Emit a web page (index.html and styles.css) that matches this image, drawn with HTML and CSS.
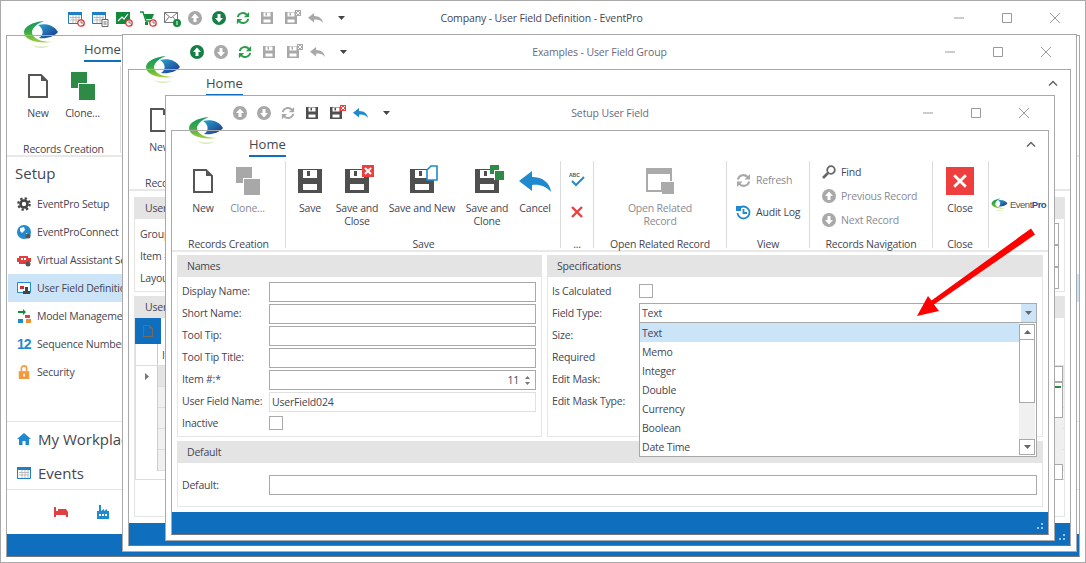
FILE: index.html
```html
<!DOCTYPE html>
<html lang="en">
<head>
<meta charset="utf-8">
<title>EventPro</title>
<link rel="stylesheet" href="styles.css">
</head>
<body>
<svg class="defs" aria-hidden="true">
  <defs>
    <linearGradient id="gGreen" x1="0.5" y1="0" x2="0.6" y2="1"><stop offset="0" stop-color="#0f9a68"/><stop offset=".45" stop-color="#3aa845"/><stop offset="1" stop-color="#a8d03c"/></linearGradient>
    <linearGradient id="gBlue" x1="0" y1="0" x2="1" y2="1"><stop offset="0" stop-color="#2ba5cf"/><stop offset="1" stop-color="#1b2f8a"/></linearGradient>
    <symbol id="logo" viewBox="0 0 34 30">
      <path fill="url(#gGreen)" d="M20 1C8 2 0 7 0 12c0 7 11 12 28 10-12 0-20-4-20-10 0-4 6-9 12-11z"/>
      <path fill="url(#gBlue)" d="M14 5c8-2 16 0 20 7-4 5-12 7-19 6 5-3 5-9-1-13z"/>
      <path fill="#d5e8b0" d="M8 25c6 2 13 2 18 0-5 4-13 4-18 0z"/>
    </symbol>
    <symbol id="floppy" viewBox="0 0 24 24"><path fill="currentColor" fill-rule="evenodd" d="M0 0H24V24H0ZM5 1V9H19V1ZM5 15V21H19V15ZM9 2H12V7H9Z"/></symbol>
    <symbol id="page" viewBox="0 0 20 24"><path fill="none" stroke="currentColor" stroke-width="2" d="M1 1H13L19 7V23H1Z"/><path fill="currentColor" d="M13 1L19 7H13Z"/></symbol>
    <symbol id="clone" viewBox="0 0 24 28"><path fill="currentColor" d="M0 0H16V16H0Z"/><path fill="#fff" d="M7 11H24V28H7Z"/><path fill="currentColor" d="M8 12H24V28H8Z"/></symbol>
    <symbol id="up" viewBox="0 0 14 14"><circle cx="7" cy="7" r="7" fill="currentColor"/><path fill="#fff" d="M7 2.500L11 7H8.500V11H5.500V7H3Z"/></symbol>
    <symbol id="down" viewBox="0 0 14 14"><circle cx="7" cy="7" r="7" fill="currentColor"/><path fill="#fff" d="M7 11.500L3 7H5.500V3H8.500V7H11Z"/></symbol>
    <symbol id="refresh" viewBox="0 0 16 16"><g fill="none" stroke="currentColor" stroke-width="2.200"><path d="M2 7a6 6 0 0 1 10.500-2.500"/><path d="M14 9a6 6 0 0 1-10.500 2.500"/></g><path fill="currentColor" d="M15 1V7H9ZM1 15V9H7Z"/></symbol>
    <symbol id="undo" viewBox="0 0 32 21"><path fill="currentColor" d="M0 10L13 0V6C24 6 31 12 32 21 27 15 20 13 13 14V20Z"/></symbol>
    <symbol id="caret" viewBox="0 0 7 4"><path fill="currentColor" d="M0 0H7L3.500 4Z"/></symbol>
    <symbol id="chev" viewBox="0 0 10 6"><path fill="none" stroke="#666" stroke-width="1.500" d="M1 5.500L5 1.500L9 5.500"/></symbol>
    <symbol id="min" viewBox="0 0 10 10"><path stroke="#999" d="M0 5H10"/></symbol>
    <symbol id="max" viewBox="0 0 10 10"><path fill="none" stroke="#999" d="M.5 .5H9.500V9.500H.5Z"/></symbol>
    <symbol id="close" viewBox="0 0 10 10"><path stroke="#999" d="M0 0L10 10M10 0L0 10"/></symbol>
    <symbol id="x" viewBox="0 0 12 12"><path stroke="currentColor" stroke-width="2.400" d="M1 1L11 11M11 1L1 11"/></symbol>
    <symbol id="xbadge" viewBox="0 0 6 6"><path fill="currentColor" d="M0 0H6V6H0Z"/><path stroke="#fff" d="M1 1L5 5M5 1L1 5"/></symbol>
    <symbol id="openrel" viewBox="0 0 28 26"><path fill="#aaa" fill-rule="evenodd" d="M0 0H26V24H0ZM2 6V22H15V14H24V6Z"/><path fill="#fff" d="M15 13H28V14H15Z"/><path fill="#aaa" d="M16 14H28V26H16Z"/></symbol>
    <symbol id="audit" viewBox="0 0 15 15"><g fill="none" stroke="#1f8ace" stroke-width="1.800"><path d="M3 3.500A6 6 0 1 1 1.500 8"/><path d="M7.500 4V8H11"/></g><path fill="#1f8ace" d="M0 1H5V6H0Z"/></symbol>
    <symbol id="find" viewBox="0 0 14 14"><circle cx="9" cy="5" r="3.800" fill="none" stroke="#666" stroke-width="1.800"/><path stroke="#666" stroke-width="2.600" d="M6 8L1 13"/></symbol>
    <symbol id="cal" viewBox="0 0 14 14"><path fill="#fff" stroke="#1f7ec4" d="M.5 1.500H13.500V12.500H.5Z"/><path fill="#1f7ec4" d="M0 1H14V4H0Z"/><path stroke="#bbb" d="M2 6.500H12M2 9H12M5 4V12M8 4V12M11 4V12"/></symbol>
    <symbol id="clock" viewBox="0 0 8 8"><circle cx="4" cy="4" r="3.200" fill="#fff" stroke="#d33" stroke-width="1.300"/><path stroke="#555" stroke-width=".8" fill="none" d="M4 2V4H6"/></symbol>
    <symbol id="gear" viewBox="0 0 14 14"><circle cx="7" cy="7" r="3.500" fill="none" stroke="currentColor" stroke-width="2.600"/><circle cx="7" cy="7" r="5.700" fill="none" stroke="currentColor" stroke-width="2.200" stroke-dasharray="2.300 2.170"/></symbol>
  </defs>
</svg>

<main class="desk">

  <section class="win win-a">
    <header class="titlebar">
      <div class="qat">
        <span class="q"><svg class="i14"><use href="#cal"/></svg><svg class="badge"><use href="#clock"/></svg></span>
        <span class="q"><svg class="i14"><use href="#cal"/></svg><svg class="badge" viewBox="0 0 7 8"><path fill="#fff" stroke="#666" d="M.5 .5H6.500V7.500H.5ZM2 3H5M2 5H5"/></svg></span>
        <span class="q"><svg class="i14" viewBox="0 0 14 14"><path fill="#118a3c" d="M0 1H14V13H0Z"/><path fill="none" stroke="#fff" stroke-width="1.200" d="M2 10L6 6L8 8L12 3"/></svg><svg class="badge"><use href="#clock"/></svg></span>
        <span class="q"><svg class="i14" viewBox="0 0 14 14"><path fill="none" stroke="#118a3c" stroke-width="1.400" d="M0 1H3L6 10H12"/><path fill="#118a3c" d="M4 3H14L12 8H6ZM5 11H8V14H5ZM10 11H12V14H10Z"/></svg><svg class="badge"><use href="#clock"/></svg></span>
        <span class="q"><svg class="i14" viewBox="0 0 14 12"><path fill="#fff" stroke="#777" d="M.5 .5H13.500V10.500H.5Z"/><path fill="none" stroke="#777" d="M.5 .5L7 6L13.500 .5M.5 10.500L5 5M13.500 10.500L9 5"/></svg><svg class="badge" viewBox="0 0 8 8"><circle cx="4" cy="4" r="4" fill="#118a3c"/><path stroke="#fff" d="M4 2V6"/></svg></span>
        <span class="q grey"><svg class="qi"><use href="#up"/></svg></span>
        <span class="q green-d"><svg class="qi"><use href="#down"/></svg></span>
        <span class="q green"><svg class="qi"><use href="#refresh"/></svg></span>
        <span class="q grey"><svg class="qf"><use href="#floppy"/></svg></span>
        <span class="q grey"><svg class="qf"><use href="#floppy"/></svg><svg class="badge-x"><use href="#xbadge"/></svg></span>
        <span class="q grey"><svg class="qu"><use href="#undo"/></svg></span>
        <svg class="q-caret"><use href="#caret"/></svg>
      </div>
      <h1 class="title title-dark">Company - User Field Definition - EventPro</h1>
      <div class="ctrls">
        <span class="ctrl"><svg class="i10"><use href="#min"/></svg></span>
        <span class="ctrl"><svg class="i10"><use href="#max"/></svg></span>
        <span class="ctrl"><svg class="i10"><use href="#close"/></svg></span>
      </div>
    </header>
    <svg class="logo logo-a"><use href="#logo"/></svg>
    <div class="frame">
      <div class="tabrow"><span class="tab">Home</span></div>
      <div class="ribbon">
        <div class="group g-records">
          <div class="gbody">
            <div class="rb w44"><span class="rb-ic"><svg class="ic-page"><use href="#page"/></svg></span><span class="rb-t">New</span></div>
            <div class="rb w45"><span class="rb-ic"><svg class="ic-clone green-c"><use href="#clone"/></svg></span><span class="rb-t">Clone...</span></div>
          </div>
          <div class="glabel">Records Creation</div>
        </div>
      </div>
      <nav class="side">
        <h2 class="side-h">Setup</h2>
        <ul class="side-list">
          <li class="side-i"><svg class="i14 gear-dark"><use href="#gear"/></svg>EventPro Setup</li>
          <li class="side-i"><svg class="i14" viewBox="0 0 14 14"><circle cx="7" cy="7" r="7" fill="#1f8ace"/><path fill="#fff" d="M3 3L7 2L8 5L5 8L3 6ZM9 8L12 9L10 12Z"/><circle cx="11" cy="11" r="2.500" fill="#555"/></svg>EventProConnect</li>
          <li class="side-i"><svg class="i14" viewBox="0 0 14 14"><path fill="#e04040" d="M2 3H11V11H2ZM0 5H14V9H0Z"/><path fill="#fff" d="M4 5H6V7H4ZM7 5H9V7H7Z"/><circle cx="11" cy="11" r="2.500" fill="#555"/></svg>Virtual Assistant Setup</li>
          <li class="side-i on"><svg class="i14" viewBox="0 0 14 14"><path fill="#fff" stroke="#1f8ace" d="M.5 1.500H13.500V11.500H.5Z"/><path fill="#c33" d="M3 5H7V8H3Z"/><path fill="#444" d="M8 6H11V10H13V13H6V10H8Z"/></svg>User Field Definitions</li>
          <li class="side-i"><svg class="i14" viewBox="0 0 14 14"><path fill="#118a3c" d="M1 2H6V0L9 3L6 6V4H1Z"/><path fill="#1f8ace" d="M1 10H6V14H1Z"/><path fill="#e04040" d="M8 6H13V9H8Z"/><path fill="#f09030" d="M9 10H14V14H9Z"/></svg>Model Management</li>
          <li class="side-i"><span class="ic-12">12</span>Sequence Numbers</li>
          <li class="side-i"><svg class="i14" viewBox="0 0 14 16"><path fill="none" stroke="#f59a3c" stroke-width="1.800" d="M4 7V4a3 3 0 0 1 6 0V7"/><path fill="#f59a3c" d="M1 7H13V16H1Z"/><path fill="#fff" d="M6 10H8V13H6Z"/></svg>Security</li>
        </ul>
        <div class="side-big">
          <div class="big-i"><svg class="i14" viewBox="0 0 14 12"><path fill="#1f8ace" d="M7 0L14 6H12V12H8.500V8H5.500V12H2V6H0Z"/></svg>My Workplace</div>
          <div class="big-i"><svg class="i14"><use href="#cal"/></svg>Events</div>
        </div>
        <div class="side-foot">
          <svg class="i14" viewBox="0 0 14 10"><path fill="#e04040" d="M0 0H2V4H4V2H12L14 5V10H12V8H2V10H0Z"/></svg>
          <svg class="i14 fact" viewBox="0 0 12 14"><path fill="#1f8ace" d="M2 0H4V6L7 4V6L10 4V6H12V14H0V6H2Z"/><path fill="#fff" d="M2 9H4V11H2ZM5 9H7V11H5ZM8 9H10V11H8Z"/></svg>
        </div>
      </nav>
      <div class="status"></div>
    </div>
  </section>

  <section class="win win-b">
    <header class="titlebar">
      <div class="qat">
        <span class="q green-d"><svg class="qi"><use href="#up"/></svg></span>
        <span class="q grey"><svg class="qi"><use href="#down"/></svg></span>
        <span class="q green"><svg class="qi"><use href="#refresh"/></svg></span>
        <span class="q grey"><svg class="qf"><use href="#floppy"/></svg></span>
        <span class="q grey"><svg class="qf"><use href="#floppy"/></svg><svg class="badge-x"><use href="#xbadge"/></svg></span>
        <span class="q grey"><svg class="qu"><use href="#undo"/></svg></span>
        <svg class="q-caret"><use href="#caret"/></svg>
      </div>
      <h1 class="title">Examples - User Field Group</h1>
      <div class="ctrls">
        <span class="ctrl"><svg class="i10"><use href="#min"/></svg></span>
        <span class="ctrl"><svg class="i10"><use href="#max"/></svg></span>
        <span class="ctrl"><svg class="i10"><use href="#close"/></svg></span>
      </div>
    </header>
    <svg class="logo logo-b"><use href="#logo"/></svg>
    <div class="frame">
      <div class="tabrow"><span class="tab">Home</span><svg class="chev"><use href="#chev"/></svg></div>
      <div class="ribbon">
        <div class="group g-records">
          <div class="gbody">
            <div class="rb w44"><span class="rb-ic"><svg class="ic-page"><use href="#page"/></svg></span><span class="rb-t">New</span></div>
          </div>
          <div class="glabel">Records Creation</div>
        </div>
      </div>
      <div class="b-body">
        <div class="b-panel b-p1">
          <div class="phead">User Field Group</div>
          <div class="b-form">
            <div class="b-row"><span class="b-lab">Group Name</span><span class="b-inp"></span></div>
            <div class="b-row"><span class="b-lab">Item #</span><span class="b-inp"></span></div>
            <div class="b-row"><span class="b-lab">Layout</span><span class="b-inp"></span></div>
          </div>
        </div>
        <div class="b-panel b-p2">
          <div class="phead">User Fields</div>
          <div class="b-tool"><span class="b-newbtn"><svg class="ic-mini"><use href="#page"/></svg></span></div>
          <div class="b-grid">
            <div class="b-ghead"><span class="b-gind"></span><span class="b-gcol">Item #</span></div>
            <div class="b-grow sel"><span class="b-gind"><svg class="tri" viewBox="0 0 4 7"><path fill="#777" d="M0 0L4 3.500L0 7Z"/></svg></span><span class="b-gcell"></span></div>
            <div class="b-grow"><span class="b-gind"></span><span class="b-gcell"></span></div>
            <div class="b-grow"><span class="b-gind"></span><span class="b-gcell"></span></div>
            <div class="b-grow"><span class="b-gind"></span><span class="b-gcell"></span></div>
            <div class="b-grow"><span class="b-gind"></span><span class="b-gcell"></span></div>
            <div class="b-sb">
              <span class="sb-btn"></span>
              <span class="sb-th"><i class="sb-mark"></i></span>
              <span class="sb-tr"></span>
              <span class="sb-btn"></span>
            </div>
          </div>
        </div>
      </div>
      <div class="status"><span class="grip"></span></div>
    </div>
  </section>

  <section class="win win-c">
    <header class="titlebar">
      <div class="qat">
        <span class="q grey"><svg class="qi"><use href="#up"/></svg></span>
        <span class="q grey"><svg class="qi"><use href="#down"/></svg></span>
        <span class="q grey"><svg class="qi"><use href="#refresh"/></svg></span>
        <span class="q dark"><svg class="qf"><use href="#floppy"/></svg></span>
        <span class="q dark"><svg class="qf"><use href="#floppy"/></svg><svg class="badge-x red"><use href="#xbadge"/></svg></span>
        <span class="q blue"><svg class="qu"><use href="#undo"/></svg></span>
        <svg class="q-caret"><use href="#caret"/></svg>
      </div>
      <h1 class="title">Setup User Field</h1>
      <div class="ctrls">
        <span class="ctrl"><svg class="i10"><use href="#min"/></svg></span>
        <span class="ctrl"><svg class="i10"><use href="#max"/></svg></span>
        <span class="ctrl"><svg class="i10"><use href="#close"/></svg></span>
      </div>
    </header>
    <svg class="logo logo-c"><use href="#logo"/></svg>
    <div class="frame">
      <div class="tabrow"><span class="tab">Home</span><svg class="chev"><use href="#chev"/></svg></div>
      <div class="ribbon">
        <div class="group g-records">
          <div class="gbody">
            <div class="rb w44"><span class="rb-ic"><svg class="ic-page"><use href="#page"/></svg></span><span class="rb-t">New</span></div>
            <div class="rb w45"><span class="rb-ic"><svg class="ic-clone grey"><use href="#clone"/></svg></span><span class="rb-t off">Clone...</span></div>
          </div>
          <div class="glabel">Records Creation</div>
        </div>
        <div class="group g-save">
          <div class="gbody">
            <div class="rb w46"><span class="rb-ic"><svg class="ic-fl"><use href="#floppy"/></svg></span><span class="rb-t">Save</span></div>
            <div class="rb w48"><span class="rb-ic"><span class="fl-wrap"><svg class="ic-fl"><use href="#floppy"/></svg><svg class="ov-x" viewBox="0 0 12 12"><path fill="#ef3e3e" d="M0 0H12V12H0Z"/><path stroke="#fff" stroke-width="2" d="M3 3L9 9M9 3L3 9"/></svg></span></span><span class="rb-t">Save and<br>Close</span></div>
            <div class="rb w82"><span class="rb-ic"><span class="fl-wrap"><svg class="ic-fl"><use href="#floppy"/></svg><svg class="ov-pg" viewBox="0 0 12 16"><path fill="#fff" stroke="#1f8ace" stroke-width="1.600" d="M1 5L5 1H11V15H1Z"/></svg></span></span><span class="rb-t">Save and New</span></div>
            <div class="rb w48"><span class="rb-ic"><span class="fl-wrap"><svg class="ic-fl"><use href="#floppy"/></svg><svg class="ov-cl" viewBox="0 0 14 15"><path fill="#2e8b45" d="M0 0H9V9H0Z"/><path fill="#fff" d="M4 5H14V15H4Z"/><path fill="#2e8b45" d="M5 6H14V15H5Z"/></svg></span></span><span class="rb-t">Save and<br>Clone</span></div>
            <div class="rb w48"><span class="rb-ic"><svg class="ic-undo blue"><use href="#undo"/></svg></span><span class="rb-t">Cancel</span></div>
          </div>
          <div class="glabel">Save</div>
        </div>
        <div class="group g-spell">
          <div class="gbody col">
            <div class="sm-ic"><svg class="ic-abc" viewBox="0 0 16 15"><text x="0" y="5" class="abc">ABC</text><path fill="none" stroke="#1f8ace" stroke-width="2" d="M3 9L7 13L15 5"/></svg></div>
            <div class="sm-ic red"><svg class="i12"><use href="#x"/></svg></div>
          </div>
          <div class="glabel">...</div>
        </div>
        <div class="group g-open">
          <div class="gbody">
            <div class="rb wfull"><span class="rb-ic"><svg class="ic-open"><use href="#openrel"/></svg></span><span class="rb-t off">Open Related<br>Record</span></div>
          </div>
          <div class="glabel">Open Related Record</div>
        </div>
        <div class="group g-view">
          <div class="gbody col">
            <div class="sm"><svg class="i15 grey"><use href="#refresh"/></svg><span class="off">Refresh</span></div>
            <div class="sm"><svg class="i15"><use href="#audit"/></svg><span>Audit Log</span></div>
          </div>
          <div class="glabel">View</div>
        </div>
        <div class="group g-nav">
          <div class="gbody col tight">
            <div class="sm sm24"><svg class="i14 find"><use href="#find"/></svg><span>Find</span></div>
            <div class="sm sm24"><svg class="i14 grey"><use href="#up"/></svg><span class="off">Previous Record</span></div>
            <div class="sm sm24"><svg class="i14 grey"><use href="#down"/></svg><span class="off">Next Record</span></div>
          </div>
          <div class="glabel">Records Navigation</div>
        </div>
        <div class="group g-close">
          <div class="gbody">
            <div class="rb wfull"><span class="rb-ic"><span class="closebtn"><svg class="ic-xw"><use href="#x"/></svg></span></span><span class="rb-t">Close</span></div>
          </div>
          <div class="glabel">Close</div>
        </div>
        <div class="brand">
          <svg class="brand-ic"><use href="#logo"/></svg><span class="brand-t">Event<b>Pro</b></span>
        </div>
      </div>
      <div class="c-body">
        <div class="c-top">
          <div class="panel p-names">
            <div class="phead">Names</div>
            <div class="pbody">
              <div class="row"><label class="lab">Display Name:</label><span class="inp"></span></div>
              <div class="row"><label class="lab">Short Name:</label><span class="inp"></span></div>
              <div class="row"><label class="lab">Tool Tip:</label><span class="inp"></span></div>
              <div class="row"><label class="lab">Tool Tip Title:</label><span class="inp"></span></div>
              <div class="row"><label class="lab">Item #:*</label><span class="inp num">11<span class="spin"><svg class="spin-a up"><use href="#caret"/></svg><svg class="spin-a"><use href="#caret"/></svg></span></span></div>
              <div class="row"><label class="lab">User Field Name:</label><span class="inp ro">UserField024</span></div>
              <div class="row"><label class="lab">Inactive</label><span class="chk"></span></div>
            </div>
          </div>
          <div class="panel p-spec">
            <div class="phead">Specifications</div>
            <div class="pbody">
              <div class="row"><label class="lab">Is Calculated</label><span class="chk"></span></div>
              <div class="row"><label class="lab">Field Type:</label>
                <span class="combo">Text<span class="combo-btn"><svg class="caret-g"><use href="#caret"/></svg></span>
                  <span class="drop">
                    <span class="drop-list">
                      <span class="opt on">Text</span>
                      <span class="opt">Memo</span>
                      <span class="opt">Integer</span>
                      <span class="opt">Double</span>
                      <span class="opt">Currency</span>
                      <span class="opt">Boolean</span>
                      <span class="opt">Date Time</span>
                    </span>
                    <span class="drop-sb">
                      <span class="dsb-btn"><svg class="caret-g flip"><use href="#caret"/></svg></span>
                      <span class="dsb-th"></span>
                      <span class="dsb-tr"></span>
                      <span class="dsb-btn"><svg class="caret-g"><use href="#caret"/></svg></span>
                    </span>
                  </span>
                </span>
              </div>
              <div class="row"><label class="lab">Size:</label></div>
              <div class="row"><label class="lab">Required</label></div>
              <div class="row"><label class="lab">Edit Mask:</label></div>
              <div class="row"><label class="lab">Edit Mask Type:</label></div>
            </div>
          </div>
        </div>
        <div class="panel p-default">
          <div class="phead">Default</div>
          <div class="pbody pad-default">
            <div class="row"><label class="lab">Default:</label><span class="inp"></span></div>
          </div>
        </div>
      </div>
      <div class="status"><span class="grip"></span></div>
    </div>
  </section>

  <svg class="arrow" viewBox="0 0 1086 563"><path fill="#f00" d="M1031 228.500L1035 234.500L934 304.500L939 311L917 316L928 296L931.500 300.500Z"/></svg>
</main>
</body>
</html>
```

FILE: styles.css
```css
* { box-sizing: border-box; }
html, body { margin: 0; padding: 0; }
body {
  width: 1086px; height: 563px; overflow: hidden; background: #fff;
  font-family: "Open Sans", "Noto Sans", sans-serif; font-size: 10.500px; letter-spacing: -.2px; color: #454552;
}
.defs { position: absolute; width: 0; height: 0; }
.desk { position: relative; width: 1086px; height: 563px; overflow: hidden; }

/* windows */
.win { position: absolute; background: #fff; border: 1px solid #a9a9a9; display: flex; flex-direction: column; overflow: hidden; }
.win-a { left: 0; top: 0; width: 1086px; height: 563px; }
.win-b { left: 122px; top: 34px; width: 955px; height: 518px; }
.win-c { left: 165px; top: 95px; width: 890px; height: 446px; }

.titlebar { height: 34px; flex: none; display: grid; grid-template-columns: 1fr auto 1fr; align-items: center; }
.qat { display: flex; align-items: center; padding-left: 62px; }
.q { position: relative; display: flex; width: 24px; height: 18px; align-items: center; justify-content: center; flex: none; }
.qi { width: 14px; height: 14px; }
.qf { width: 12px; height: 12px; }
.qu { width: 15px; height: 10px; }
.badge { position: absolute; right: 2px; bottom: 0; width: 8px; height: 8px; }
.badge-x { position: absolute; right: 2px; top: 1px; width: 6px; height: 6px; }
.q-caret { width: 7px; height: 4px; margin-left: 11px; color: #444; }
.title { margin: 0; font-size: 10.500px; font-weight: 400; letter-spacing: -.13px; color: #6a6a80; white-space: nowrap; }
.title-dark { color: #454552; margin-right: 3px; }
.ctrls { display: flex; justify-content: flex-end; padding-right: 6px; }
.ctrl { width: 48px; height: 34px; display: flex; align-items: center; justify-content: center; }
.i10 { width: 10px; height: 10px; }
.i12 { width: 12px; height: 12px; }
.i14 { width: 14px; height: 14px; flex: none; }
.i15 { width: 15px; height: 15px; flex: none; }

.grey { color: #a8a8a8; }
.dark { color: #4f4f4f; }
.green { color: #2e9a4c; }
.green-d { color: #177f45; }
.blue { color: #1f8ace; }
.green-c { color: #2e8b45; }
.red { color: #ef3e3e; }

/* logo floats over the frame edge */
.logo { position: absolute; width: 34px; height: 30px; background: #fff; box-shadow: 0 0 0 5px #fff; }
.logo-a { left: 23px; top: 19px; }
.logo-b { left: 23px; top: 20px; }
.logo-c { left: 23px; top: 20px; }

/* frame */
.frame { flex: 1; min-height: 0; margin: 0 5px 5px; border: 1px solid #a9a9a9; border-bottom-color: #777; display: flex; flex-direction: column; position: relative; }
.tabrow { height: 26px; flex: none; padding-left: 77px; position: relative; display: flex; }
.tab { font-size: 13px; letter-spacing: 0; height: 26px; line-height: 26px; border-bottom: 2.500px solid #0f6ebd; color: #454552; }
.chev { position: absolute; right: 12px; top: 10px; width: 10px; height: 6px; }
.ribbon { height: 95px; flex: none; padding: 4px 0; display: flex; border-bottom: 2px solid #e8e8e8; }
.group { height: 87px; display: flex; flex-direction: column; border-right: 1px solid #dcdcdc; flex: none; }
.gbody { flex: 1; min-height: 0; display: flex; }
.gbody.col { flex-direction: column; }
.glabel { height: 14px; line-height: 14px; margin-bottom: -3px; text-align: center; white-space: nowrap; }
.g-records { width: 114px; padding-left: 9px; }
.g-records .glabel { margin-left: -9px; }
.g-save { width: 275px; padding-left: 1px; }
.g-spell { width: 33px; }
.g-open { width: 133px; }
.g-view { width: 83px; }
.g-nav { width: 123px; }
.g-close { width: 56px; padding-right: 1px; }
.rb { display: flex; flex-direction: column; align-items: center; padding-top: 7px; flex: none; }
.rb-ic { height: 26px; margin-bottom: 8px; display: flex; align-items: center; justify-content: center; }
.rb-t { line-height: 13px; text-align: center; white-space: nowrap; }
.off { color: #8a8a94; }
.w44 { width: 44px; } .w45 { width: 45px; } .w46 { width: 46px; } .w48 { width: 48px; } .w82 { width: 82px; }
.wfull { width: 100%; }
.ic-page { width: 20px; height: 24px; color: #555; }
.ic-clone { width: 24px; height: 28px; }
.ic-fl { width: 24px; height: 24px; color: #4f4f4f; display: block; }
.fl-wrap { position: relative; display: block; width: 24px; height: 24px; }
.ov-x { position: absolute; left: 17px; top: -4px; width: 12px; height: 12px; }
.ov-pg { position: absolute; left: 16px; top: -4px; width: 12px; height: 16px; }
.ov-cl { position: absolute; left: 15px; top: -4px; width: 14px; height: 15px; }
.ic-undo { width: 32px; height: 21px; }
.ic-open { width: 28px; height: 26px; }
.sm-ic { height: 33px; display: flex; align-items: center; justify-content: center; padding-top: 3px; }
.ic-abc { width: 16px; height: 15px; }
.abc { font-size: 5px; font-weight: 700; fill: #555; font-family: "Liberation Sans", sans-serif; letter-spacing: 0; }
.sm { height: 32px; display: flex; align-items: center; gap: 5px; padding: 6px 0 0 9px; white-space: nowrap; }
.sm24 { height: 24px; padding: 0 0 0 12px; }
.tight { margin-top: -1px; }
.closebtn { width: 28px; height: 28px; background: #ef3e3e; display: flex; align-items: center; justify-content: center; color: #fff; }
.ic-xw { width: 14px; height: 14px; }
.brand { flex: 1; display: flex; align-items: center; padding: 0 0 0 2px; height: 87px; gap: 2px; }
.brand-ic { width: 17px; height: 14px; flex: none; }
.brand-t { font-family: "Liberation Sans", sans-serif; font-size: 9.500px; letter-spacing: -.5px; color: #555; }
.brand-t b { color: #1d4f9c; }
.find { color: #666; }

/* sidebar of the back window */
.side { flex: 1; min-height: 0; display: flex; flex-direction: column; }
.side-h { margin: 0; height: 33px; line-height: 33px; padding-left: 8px; font-size: 15px; font-weight: 400; letter-spacing: 0; color: #454552; }
.side-list { list-style: none; margin: 0; padding: 0; height: 232px; flex: none; border-bottom: 1px solid #e4e4e4; }
.side-i { height: 28px; display: flex; align-items: center; gap: 6px; padding-left: 9px; margin-left: 1px; white-space: nowrap; }
.side-i.on { background: #cce4f7; }
.gear-dark { color: #444; }
.ic-12 { width: 14px; flex: none; font: 700 14px "Liberation Sans", sans-serif; color: #1f8ace; letter-spacing: -1px; }
.side-big { height: 68px; flex: none; border-bottom: 1px solid #e4e4e4; }
.big-i { height: 34px; display: flex; align-items: center; gap: 7px; padding-left: 10px; font-size: 15px; letter-spacing: 0; white-space: nowrap; }
.side-foot { flex: 1; display: flex; align-items: center; padding-left: 47px; gap: 28px; }
.status { height: 22px; flex: none; background: #0f6ebd; position: relative; }
.grip { position: absolute; right: 3px; bottom: 3px; width: 12px; height: 12px;
  background: radial-gradient(circle at 1px 1px, #9cc4e6 1px, transparent 1.200px) 0 0 / 4px 4px;
  clip-path: polygon(100% 0, 100% 100%, 0 100%); }

/* middle window body */
.b-body { flex: 1; min-height: 0; padding: 6px 5px 6px; display: flex; flex-direction: column; gap: 4px; }
.phead { height: 22px; flex: none; line-height: 22px; padding-left: 10px; background: #e4e4e4; white-space: nowrap; }
.b-panel { border: 1px solid #e4e4e4; border-top: 0; display: flex; flex-direction: column; }
.b-p1 { height: 95px; flex: none; }
.b-form { padding: 4px 5px; }
.b-row { height: 22px; display: flex; align-items: center; justify-content: space-between; }
.b-inp { width: 120px; height: 22px; border: 1px solid #a9a9a9; }
.b-p2 { flex: 1; min-height: 0; }
.b-tool { height: 26px; flex: none; display: flex; align-items: stretch; }
.b-newbtn { width: 26px; background: #0f6ebd; display: flex; align-items: center; justify-content: center; }
.ic-mini { width: 10px; height: 12px; color: #7a6a5a; }
.b-grid { position: relative; height: 136px; border-bottom: 1px solid #ddd; border-left: 1px solid #ddd; }
.b-ghead { height: 22px; display: flex; border-bottom: 1px solid #ddd; }
.b-gind { width: 22px; flex: none; border-right: 1px solid #ccc; display: flex; align-items: center; justify-content: center; }
.b-gcol { padding: 4px 0 0 4px; }
.b-grow { height: 21px; display: flex; }
.b-gcell { flex: 1; background: #f0f0f0; border-bottom: 1px solid #ddd; }
.b-grow.sel .b-gcell { background: #e4e4e4; }
.tri { width: 4px; height: 7px; }
.b-sb { position: absolute; right: 1px; top: 22px; width: 10px; height: 114px; display: flex; flex-direction: column; background: #fff; }
.sb-btn { height: 16px; border: 1px solid #a9a9a9; flex: none; background: #fff; }
.sb-th { height: 36px; border: 1px solid #a9a9a9; flex: none; position: relative; background: #fff; }
.sb-mark { position: absolute; left: 1px; right: 1px; top: 3px; height: 2px; background: #2e8b45; }
.sb-tr { flex: 1; background: #efefef; }

/* front window body */
.c-body { flex: 1; min-height: 0; padding: 3px 5px 5px; display: flex; flex-direction: column; gap: 4px; }
.c-top { display: flex; gap: 5px; height: 182px; flex: none; }
.panel { display: flex; flex-direction: column; }
.p-names { width: 365px; flex: none; }
.p-spec { flex: 1; min-width: 0; }
.p-default { flex: 1; min-height: 0; }
.pbody { flex: 1; min-height: 0; border: 1px solid #e6e6e6; border-top: 0; padding: 3px 5px 0 4px; }
.pad-default { padding-top: 10px; }
.pad-default .lab { padding-top: 2px; }
.row { height: 22px; display: flex; align-items: center; position: relative; }
.lab { width: 87px; flex: none; white-space: nowrap; }
.inp { flex: 1; min-width: 0; height: 20px; border: 1px solid #a9a9a9; margin-top: 2px; padding: 0 2px; line-height: 18px; display: flex; justify-content: flex-end; align-items: center; }
.inp.ro { border-color: #e0e0e0; justify-content: flex-start; color: #454552; }
.inp.num { padding-right: 0; }
.spin { width: 16px; display: flex; flex-direction: column; align-items: center; gap: 3px; }
.spin-a { width: 5px; height: 3px; color: #777; display: block; }
.spin-a.up, .flip { transform: scaleY(-1); }
.chk { width: 14px; height: 14px; border: 1px solid #a9a9a9; }
.combo { position: relative; flex: 1; min-width: 0; height: 20px; border: 1px solid #a9a9a9; padding-left: 2px; line-height: 18px; }
.combo-btn { position: absolute; right: 0; top: 0; width: 15px; height: 18px; background: #cce4f7; display: flex; align-items: center; justify-content: center; }
.caret-g { width: 7px; height: 4px; color: #666; }
.drop { position: absolute; left: -1px; right: -1px; top: 18px; height: 135px; border: 1px solid #a9a9a9; background: #fff; display: flex; z-index: 2; }
.drop-list { flex: 1; min-width: 0; display: flex; flex-direction: column; }
.opt { height: 19px; line-height: 21px; padding-left: 2px; }
.opt.on { background: #cce4f7; }
.drop-sb { width: 16px; flex: none; display: flex; flex-direction: column; margin: 1px 1px 1px 0; }
.dsb-btn { height: 16px; flex: none; border: 1px solid #a9a9a9; display: flex; align-items: center; justify-content: center; background: #fff; }
.dsb-th { height: 63px; flex: none; border: 1px solid #a9a9a9; border-top: 0; background: #fff; }
.dsb-tr { flex: 1; background: #f0f0f0; }

.arrow { position: absolute; left: 0; top: 0; width: 1086px; height: 563px; pointer-events: none; }
```
